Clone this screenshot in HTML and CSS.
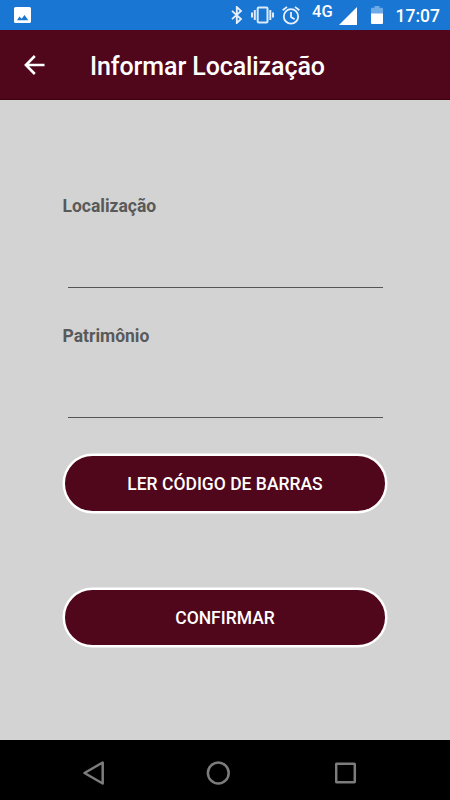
FILE: index.html
```html
<!DOCTYPE html>
<html lang="pt-BR">
<head>
<meta charset="utf-8">
<title>Informar Localização</title>
<link rel="stylesheet" href="styles.css">
</head>
<body>
<div class="screen">
  <div class="status">
    <svg class="picture" width="17" height="17" viewBox="0 0 17 17"><path fill="#fff" fill-rule="evenodd" d="M1.500 0h14A1.500 1.500 0 0 1 17 1.500v13a1.500 1.500 0 0 1-1.500 1.500h-14A1.500 1.500 0 0 1 0 14.500v-13A1.500 1.500 0 0 1 1.500 0zM3 13.200h11.300L10.500 8 7.700 11.700 5.500 9.500z"/></svg>
    <svg class="bluetooth" width="12" height="18" viewBox="0 0 12 18"><path fill="none" stroke="#e8f1fb" stroke-width="1.800" d="M1 4.800l9 8.200-4.200 4V1L10 5 1 13.200"/></svg>
    <svg class="vibrate" width="23" height="18" viewBox="0 0 23 18"><g fill="none" stroke="#dceafa" stroke-width="2"><rect x="6.700" y="1.400" width="9.800" height="15.200" rx="1"/><path d="M3.800 4v10M1 6.500v5M19.300 4v10M22 6.500v5"/></g></svg>
    <svg class="alarm" width="18" height="19" viewBox="0 0 18 19"><g fill="none" stroke="#e8f1fb" stroke-width="1.800"><circle cx="9" cy="10.400" r="7.200"/><path d="M9 6v5l3.600 2.200M.7 4.300L5 .9M17.300 4.300L13 .9"/></g></svg>
    <span class="network">4G</span>
    <svg class="signal" width="18" height="18" viewBox="0 0 18 18"><path fill="#fff" d="M18 0v18H0z"/></svg>
    <svg class="battery" width="12" height="18" viewBox="0 0 12 18"><path fill="#6caae8" d="M3.500 0h5v1.800H11a1 1 0 0 1 1 1V8H0V2.800a1 1 0 0 1 1-1h2.500z"/><path fill="#fff" d="M0 7.500h12V17a1 1 0 0 1-1 1H1a1 1 0 0 1-1-1z"/></svg>
    <span class="clock">17:07</span>
  </div>
  <header class="appbar">
    <svg class="back" width="21" height="20" viewBox="0 0 21 20"><path fill="none" stroke="#fff" stroke-width="2.600" d="M20.500 10H2.500M10.800 1L1.900 10l8.900 9"/></svg>
    <h1 class="title">Informar Localização</h1>
  </header>
  <main class="form">
    <label class="field"><span class="label">Localização</span><input class="input" type="text"></label>
    <label class="field"><span class="label">Patrimônio</span><input class="input" type="text"></label>
    <button class="button scan">LER CÓDIGO DE BARRAS</button>
    <button class="button confirm">CONFIRMAR</button>
  </main>
  <nav class="navbar">
    <svg class="nav-back" width="22" height="24" viewBox="0 0 22 24"><path fill="none" stroke="#7c7c7c" stroke-width="2.500" stroke-linejoin="round" d="M19.700 1.500v21L1.500 12z"/></svg>
    <svg class="nav-home" width="24" height="24" viewBox="0 0 24 24"><circle cx="12.300" cy="12" r="10.400" fill="none" stroke="#7c7c7c" stroke-width="2.500"/></svg>
    <svg class="nav-recent" width="22" height="22" viewBox="0 0 22 22"><rect x="1.200" y="1.700" width="18.600" height="18.600" rx=".5" fill="none" stroke="#7c7c7c" stroke-width="2.500"/></svg>
  </nav>
</div>
</body>
</html>
```
FILE: styles.css
```css
* { box-sizing: border-box; }
body { margin: 0; font-family: Roboto, sans-serif; }
svg { display: block; flex: none; }
.screen { width: 450px; height: 800px; display: flex; flex-direction: column; background: #d3d3d3; }
.status { height: 30px; display: flex; align-items: flex-start; background: #1976d2; color: #fff; }
.picture { margin: 7px 0 0 14px; }
.bluetooth { margin: 6px 0 0 200px; }
.vibrate { margin: 6px 0 0 8px; }
.alarm { margin: 6px 0 0 8px; }
.network { width: 22px; margin: 2px 0 0 12px; font-size: 16.5px; line-height: 19px; font-weight: 500; white-space: nowrap; }
.signal { margin: 7px 0 0 5px; }
.battery { margin: 6px 0 0 14px; }
.clock { margin: 6px 0 0 12.500px; font-size: 17.5px; line-height: 21px; font-weight: 500; }
.appbar { height: 70px; display: flex; align-items: center; background: #50061b; border-bottom: 1px solid #3b0010; }
.back { margin-left: 24px; }
.title { margin: 5px 0 0 45px; color: #fff; font-size: 25px; line-height: 30px; font-weight: 500; letter-spacing: -0.1px; white-space: nowrap; }
.form { flex: 1; display: flex; flex-direction: column; padding: 95px 63px 0; }
.field { height: 130px; }
.label { display: block; height: 22px; margin-left: -0.5px; color: #595959; font-size: 17.5px; line-height: 22px; font-weight: 700; }
.input { display: block; width: 315px; height: 71px; margin-left: 4.5px; padding: 0; border: 0; border-bottom: 1px solid #545454; background: transparent; font: 18px Roboto, sans-serif; outline: 0; }
.button { height: 59px; flex: none; padding: 0; border: 2px solid #fff; border-radius: 30px; background: #50061b; box-shadow: 0 0 0 0.5px #fff; color: #fff; font: 500 17.5px/20px Roboto, sans-serif; }
.scan { margin-top: -1px; }
.confirm { margin-top: 75px; }
.navbar { height: 60px; display: flex; align-items: center; padding-top: 6px; background: #000; }
.nav-back { margin-left: 83px; }
.nav-home { margin-left: 101px; }
.nav-recent { margin-left: 105px; }
```
